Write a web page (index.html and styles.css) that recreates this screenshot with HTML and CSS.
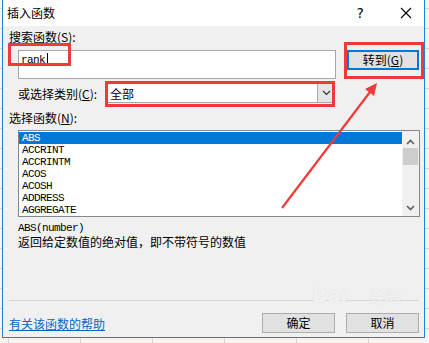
FILE: index.html
```html
<!DOCTYPE html>
<html lang="zh-CN">
<head>
    <meta charset="UTF-8">
    <meta name="viewport" content="width=device-width, initial-scale=1.0">
    <title>插入函数</title>
    <link rel="stylesheet" href="styles.css">
</head>
<body>
    <div class="page">
        <div class="dialog">
            <div class="titlebar">
                <span class="title">插入函数</span>
                <span class="help">?</span>
                <svg class="close" width="12" height="12" viewBox="0 0 12 12">
                    <path d="M1 1 L11 11 M11 1 L1 11" stroke="#000" stroke-width="1.1" fill="none"/>
                </svg>
            </div>

            <div class="content">
                <div class="label">搜索函数(<u>S</u>):</div>
                <div class="search-row">
                    <div class="search-box"><span class="mono">rank</span><span class="caret"></span></div>
                    <button class="btn btn-default">转到(<u>G</u>)</button>
                </div>

                <div class="category-row">
                    <span class="category-label">或选择类别(<u>C</u>):</span>
                    <div class="select">
                        <span class="select-value">全部</span>
                        <span class="select-arrow">
                            <svg width="9" height="6" viewBox="0 0 9 6"><path d="M1 1 L4.5 4.5 L8 1" stroke="#333" stroke-width="1.2" fill="none"/></svg>
                        </span>
                    </div>
                </div>

                <div class="label label-list">选择函数(<u>N</u>):</div>
                <div class="list">
                    <ul class="items">
                        <li class="selected">ABS</li>
                        <li>ACCRINT</li>
                        <li>ACCRINTM</li>
                        <li>ACOS</li>
                        <li>ACOSH</li>
                        <li>ADDRESS</li>
                        <li>AGGREGATE</li>
                    </ul>
                    <div class="scrollbar">
                        <svg width="9" height="6" viewBox="0 0 9 6"><path d="M1 5 L4.5 1.5 L8 5" stroke="#606060" stroke-width="1.6" fill="none"/></svg>
                        <div class="thumb"></div>
                        <div class="track"></div>
                        <svg width="9" height="6" viewBox="0 0 9 6"><path d="M1 1 L4.5 4.5 L8 1" stroke="#606060" stroke-width="1.6" fill="none"/></svg>
                    </div>
                </div>

                <div class="syntax mono">ABS(number)</div>
                <div class="desc">返回给定数值的绝对值，即不带符号的数值</div>

                <div class="separator"></div>

                <div class="footer">
                    <a class="help-link" href="#">有关该函数的帮助</a>
                    <div class="buttons">
                        <button class="btn">确定</button>
                        <button class="btn">取消</button>
                    </div>
                </div>
            </div>
        </div>

        <!-- annotations drawn over the dialog -->
        <div class="mark mark-search"></div>
        <div class="mark mark-category"></div>
        <div class="mark mark-goto"></div>
        <svg class="arrow" width="429" height="343" viewBox="0 0 429 343">
            <line x1="282" y1="208" x2="370" y2="92" stroke="#f03a3a" stroke-width="2.2"/>
            <polygon points="377,83 374,96 365,89" fill="#f03a3a"/>
        </svg>
        <div class="watermark">Bai<span class="wm-cn">经验</span></div>
    </div>
</body>
</html>
```

FILE: styles.css
```css
body {
    margin: 0;
    padding: 0;
    font-family: "Noto Sans CJK SC", "Noto Sans", sans-serif;
    font-size: 12px;
    color: #000;
}
.page {
    position: relative;
    width: 429px;
    height: 343px;
    overflow: hidden;
    background-color: #f4f4f4;
    background-image:
        linear-gradient(#d6d6d6 1px, transparent 1px),
        linear-gradient(90deg, #d6d6d6 1px, transparent 1px);
    background-size: 72px 20px;
    background-position: 0 8px, 8px 0;
}
.dialog {
    margin-left: 2px;
    width: 423px;
    height: 338px;
    box-sizing: border-box;
    border: 1px solid #1883d7;
    border-top: none;
    background: #f0f0f0;
    display: flex;
    flex-direction: column;
}
.titlebar {
    height: 26px;
    background: #fff;
    display: flex;
    align-items: center;
    padding-left: 4px;
}
.title {
    flex: 1;
    line-height: 14px;
}
.help {
    font-family: "DejaVu Sans", sans-serif;
    font-size: 14px;
    margin-right: 36px;
}
.close {
    margin-right: 12px;
}
.content {
    flex: 1;
    padding: 4px 5px 0 6px;
}
.label {
    line-height: 14px;
}
.label-list {
    margin-top: 8px;
}
.mono {
    font-family: "Liberation Mono", monospace;
    font-size: 11px;
    letter-spacing: -0.6px;
}
.search-row {
    display: flex;
    align-items: flex-start;
    margin: 6px 0 0 9px;
}
.search-box {
    width: 318px;
    height: 29px;
    box-sizing: border-box;
    border: 1px solid #a6a6a6;
    background: #fff;
    padding: 1px 0 0 2px;
    display: flex;
    align-items: flex-start;
    line-height: 12px;
}
.search-box .mono {
    margin-top: 2px;
}
.caret {
    width: 1px;
    height: 13px;
    background: #000;
    margin: 1px 0 0 2px;
}
.btn {
    width: 73px;
    height: 20px;
    box-sizing: border-box;
    background: #e1e1e1;
    border: 1px solid #adadad;
    font-family: "Noto Sans CJK SC", sans-serif;
    font-size: 12px;
    padding: 0;
    line-height: 16px;
    color: #000;
}
.btn-default {
    width: 72px;
    margin-left: 11px;
    border: 2px solid #0078d7;
}
.category-row {
    display: flex;
    align-items: center;
    margin: 4px 0 0 9px;
    height: 20px;
}
.category-label {
    width: 89px;
}
.select {
    width: 228px;
    height: 20px;
    box-sizing: border-box;
    background: #fff;
    border: 1px solid #a6a6a6;
    display: flex;
    align-items: center;
}
.select-value {
    flex: 1;
    padding-left: 2px;
}
.select-arrow {
    width: 17px;
    height: 18px;
    box-sizing: border-box;
    background: #e5e5e5;
    border-left: 1px solid #acacac;
    display: flex;
    align-items: center;
    justify-content: center;
}
.list {
    margin: 5px 0 0 9px;
    width: 402px;
    height: 87px;
    box-sizing: border-box;
    border: 1px solid #828790;
    background: #fff;
    display: flex;
}
.items {
    list-style: none;
    margin: 0;
    padding: 1px 0 0 0;
    flex: 1;
    font-family: "Liberation Mono", monospace;
    font-size: 11px;
    letter-spacing: -0.6px;
}
.items li {
    height: 12px;
    line-height: 12px;
    padding-left: 3px;
}
.items li.selected {
    background: #0078d7;
    color: #fff;
}
.scrollbar {
    width: 17px;
    background: #f0f0f0;
    display: flex;
    flex-direction: column;
    align-items: center;
    padding: 8px 0 5px 0;
    box-sizing: border-box;
}
.thumb {
    width: 15px;
    height: 17px;
    background: #cdcdcd;
    margin-top: 3px;
}
.track {
    flex: 1;
}
.syntax {
    margin: 5px 0 0 9px;
    line-height: 12px;
}
.desc {
    margin: 1px 0 0 9px;
    line-height: 14px;
}
.separator {
    margin-top: 51px;
    width: 410px;
    height: 1px;
    background: #d7d7d7;
}
.footer {
    margin-top: 12px;
    display: flex;
    align-items: center;
    justify-content: space-between;
}
.help-link {
    color: #0066cc;
    text-decoration: underline;
    line-height: 14px;
    margin-top: 1px;
}
.buttons {
    display: flex;
    gap: 11px;
}
.mark {
    position: absolute;
    border: 3px solid #f03a3a;
    box-sizing: border-box;
}
.mark-search {
    left: 8px;
    top: 43px;
    width: 63px;
    height: 23px;
}
.mark-category {
    left: 105px;
    top: 81px;
    width: 230px;
    height: 26px;
}
.mark-goto {
    left: 344px;
    top: 42px;
    width: 80px;
    height: 37px;
}
.arrow {
    position: absolute;
    left: 0;
    top: 0;
    pointer-events: none;
}
.watermark {
    position: absolute;
    left: 312px;
    top: 284px;
    font-family: "DejaVu Sans", sans-serif;
    font-size: 20px;
    font-weight: bold;
    line-height: 22px;
    color: rgba(255, 255, 255, 0.7);
    text-shadow: 0 0 1px #cfcfcf;
}
.wm-cn {
    font-family: "Noto Sans CJK SC", sans-serif;
    font-size: 16px;
    margin-left: 22px;
}
```
